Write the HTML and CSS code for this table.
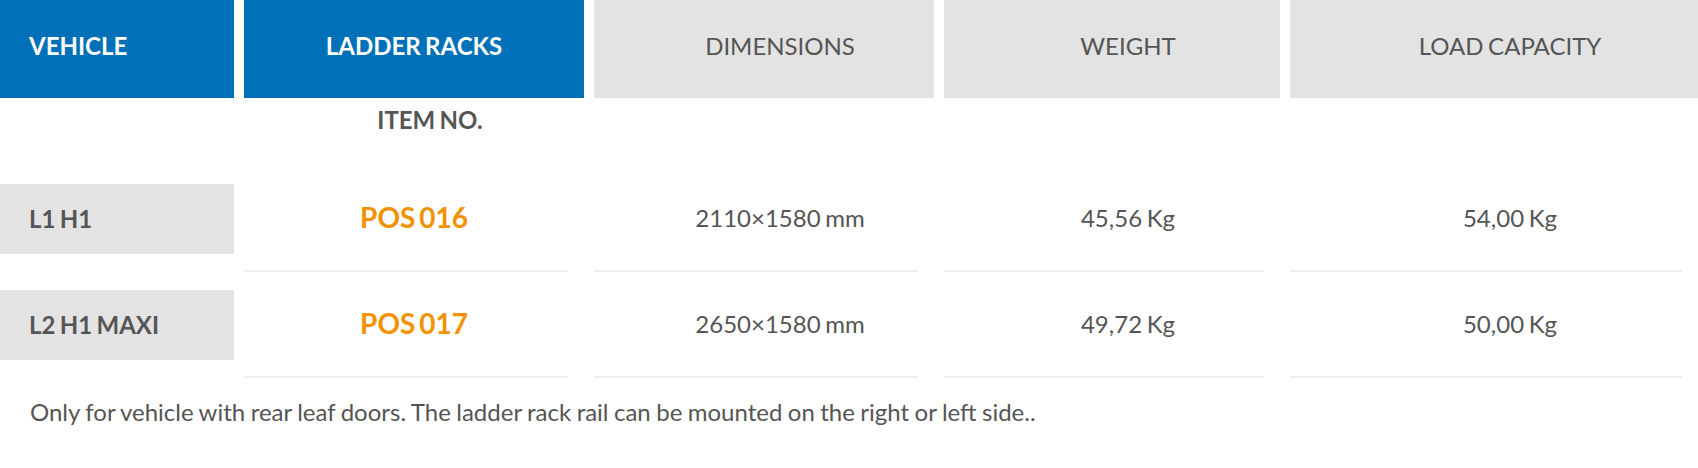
FILE: index.html
```html
<!DOCTYPE html>
<html>
<head>
<meta charset="utf-8">
<link rel="stylesheet" href="styles.css">
</head>
<body>
<div class="specs">
  <div class="head head-blue head-left">VEHICLE</div>
  <div class="head head-blue">LADDER RACKS</div>
  <div class="head head-gray shift">DIMENSIONS</div>
  <div class="head head-gray shift">WEIGHT</div>
  <div class="head head-gray shift">LOAD CAPACITY</div>

  <div class="blank"></div>
  <div class="item-no">ITEM NO.</div>
  <div class="blank"></div>
  <div class="blank"></div>
  <div class="blank"></div>

  <div class="veh">L1 H1</div>
  <div class="cell pos">POS 016</div>
  <div class="cell shift">2110×1580 mm</div>
  <div class="cell shift">45,56 Kg</div>
  <div class="cell shift">54,00 Kg</div>

  <div class="veh">L2 H1 MAXI</div>
  <div class="cell pos">POS 017</div>
  <div class="cell shift">2650×1580 mm</div>
  <div class="cell shift">49,72 Kg</div>
  <div class="cell shift">50,00 Kg</div>
</div>
<p class="note">Only for vehicle with rear leaf doors. The ladder rack rail can be mounted on the right or left side..</p>
</body>
</html>
```
FILE: styles.css
```css
html, body {
  margin: 0;
  padding: 0;
  background: #ffffff;
}

body {
  font-family: Lato, "Open Sans", "Liberation Sans", sans-serif;
  color: #555555;
  font-size: 24px;
  line-height: 1.2;
  word-spacing: -1.5px;
  width: 1698px;
  overflow: hidden;
}

.specs {
  display: grid;
  grid-template-columns: 234px 340px 340px 336px 408px;
  grid-template-rows: 98px 68px 106px 106px;
  column-gap: 10px;
}

.head {
  display: flex;
  align-items: center;
  justify-content: center;
  padding-bottom: 5px;
  box-sizing: border-box;
}

.head-blue {
  background: #0070b8;
  color: #ffffff;
  font-weight: 700;
}

.head-gray {
  background: #e3e3e3;
  color: #555555;
  font-weight: 400;
}

.head-left {
  justify-content: flex-start;
  padding-left: 29px;
}

.shift {
  padding-left: 32px;
  box-sizing: border-box;
}

.item-no {
  font-weight: 700;
  text-align: center;
  padding-left: 32px;
  padding-top: 8px;
}

.veh {
  margin: 18px 0;
  background: #e3e3e3;
  display: flex;
  align-items: center;
  padding-left: 29px;
  font-weight: 700;
}

.cell {
  display: flex;
  align-items: center;
  justify-content: center;
  padding-bottom: 2px;
  background: linear-gradient(#eeeeee, #eeeeee) no-repeat left bottom / calc(100% - 16px) 2px;
}

.pos {
  color: #f39200;
  font-weight: 700;
  font-size: 28px;
  word-spacing: -3px;
}

.note {
  margin: 20px 0 0;
  padding-left: 30px;
  word-spacing: -0.7px;
}
```
